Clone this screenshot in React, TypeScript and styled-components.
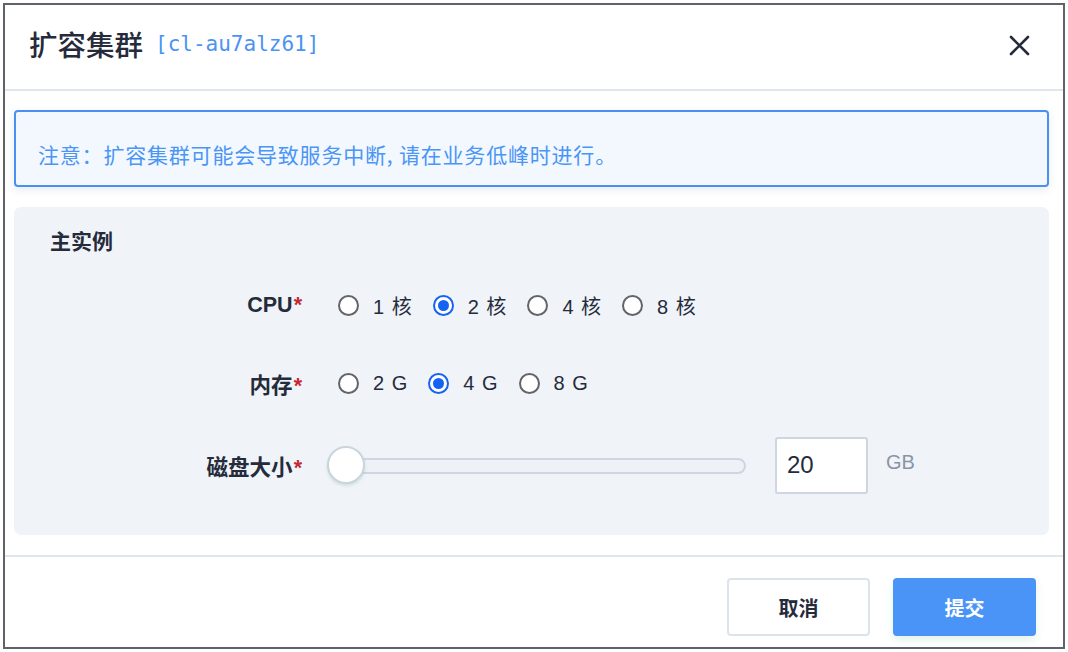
import React from "react";
import styled, { createGlobalStyle } from "styled-components";

const GlobalStyle = createGlobalStyle`
  html, body { margin: 0; padding: 0; background: #ffffff; }
  body { font-family: "Liberation Sans", "Noto Sans CJK SC", Arial, sans-serif; }
  * { box-sizing: border-box; }
`;

const Frame = styled.div`
  padding: 3px 0 0 3px;
`;

const Dialog = styled.div`
  width: 1062px;
  height: 646px;
  border: 2px solid #5f6269;
  background: #ffffff;
  display: flex;
  flex-direction: column;
`;

const Header = styled.div`
  height: 86px;
  flex: none;
  display: flex;
  align-items: center;
  padding: 0 32px 0 24px;
  border-bottom: 2px solid #e0e6ed;
`;

const Title = styled.h1`
  margin: 0;
  font-family: "Noto Sans CJK SC", sans-serif;
  font-size: 28.5px;
  font-weight: 500;
  color: #252b3b;
  line-height: 1;
  display: flex;
  align-items: center;
  gap: 12px;
  flex: 1;
  padding-bottom: 6px;
`;

const ClusterId = styled.span`
  font-family: "DejaVu Sans Mono", "Liberation Mono", monospace;
  font-size: 21px;
  font-weight: 400;
  color: #4b93f3;
`;

const CloseButton = styled.button`
  width: 24px;
  height: 24px;
  border: none;
  background: none;
  padding: 0;
  display: flex;
  align-items: center;
  justify-content: center;
  margin-bottom: 4px;
  cursor: pointer;
`;

const Body = styled.div`
  padding: 19px 14px 20px 9px;
  display: flex;
  flex-direction: column;
  gap: 20px;
  border-bottom: 2px solid #e0e6ed;
`;

const Alert = styled.div`
  height: 77px;
  border: 2px solid #4a90f0;
  border-radius: 4px;
  background: #f3f8fe;
  box-shadow: 0 3px 8px rgba(60, 90, 130, 0.12);
  display: flex;
  align-items: center;
  padding: 0 22px;
  font-family: "Noto Sans CJK SC", sans-serif;
  font-size: 21px;
  letter-spacing: 0.8px;
  color: #4a95f5;
  padding-top: 10px;
`;

const Panel = styled.div`
  height: 328px;
  border-radius: 7px;
  background: #f0f4f8;
  padding: 19px 0 0 36px;
  display: flex;
  flex-direction: column;
`;

const SectionTitle = styled.div`
  font-family: "Noto Sans CJK SC", sans-serif;
  font-size: 21px;
  font-weight: 700;
  color: #252b3b;
  line-height: 28px;
  margin-bottom: 22px;
`;

const Row = styled.div<{ $top?: number }>`
  height: 58px;
  margin-top: ${(p) => p.$top ?? 0}px;
  display: grid;
  grid-template-columns: 252px 1fr;
  column-gap: 36px;
  align-items: center;
`;

const Label = styled.div`
  text-align: right;
  font-family: "Liberation Sans", "Noto Sans CJK SC", sans-serif;
  font-size: 21.5px;
  font-weight: 700;
  color: #252b3b;
`;

const Star = styled.span`
  color: #c62a30;
  font-weight: 700;
  margin-left: 1px;
`;

const RadioGroup = styled.div`
  display: flex;
  align-items: center;
  gap: 20px;
`;

const Option = styled.label`
  display: flex;
  align-items: center;
  gap: 14px;
  font-family: "Liberation Sans", "Noto Sans CJK SC", sans-serif;
  font-size: 20px;
  color: #252b3b;
  letter-spacing: 1px;
  cursor: pointer;
`;

const Radio = styled.span<{ $checked?: boolean }>`
  width: 21px;
  height: 21px;
  border-radius: 50%;
  border: 2px solid ${(p) => (p.$checked ? "#1463f3" : "#626469")};
  background: #ffffff;
  display: flex;
  align-items: center;
  justify-content: center;
  &::after {
    content: "";
    width: 11px;
    height: 11px;
    border-radius: 50%;
    background: ${(p) => (p.$checked ? "#1463f3" : "transparent")};
  }
`;

const DiskControls = styled.div`
  display: flex;
  align-items: center;
  margin-left: -11px;
`;

const Slider = styled.div`
  width: 419px;
  height: 40px;
  display: flex;
  align-items: center;
  position: relative;
`;

const Track = styled.div`
  flex: 1;
  height: 16px;
  margin-left: 3px;
  margin-top: 2px;
  border-radius: 8px;
  background: #eef1f6;
  border: 2px solid #cdd6e1;
`;

const Thumb = styled.div`
  position: absolute;
  left: 0;
  top: 1px;
  width: 38px;
  height: 38px;
  border-radius: 50%;
  background: #ffffff;
  border: 2px solid #c9d4dc;
  box-shadow: 0 2px 3px rgba(120, 170, 150, 0.25);
`;

const SizeInput = styled.div`
  width: 93px;
  height: 57px;
  margin-left: 29px;
  border: 2px solid #cdd6e1;
  border-radius: 3px;
  background: #ffffff;
  display: flex;
  align-items: center;
  padding: 0 10px;
  font-family: "Liberation Sans", sans-serif;
  font-size: 24px;
  color: #252b3b;
`;

const Unit = styled.span`
  margin-left: 18px;
  margin-bottom: 6px;
  font-family: "Liberation Sans", sans-serif;
  font-size: 20px;
  color: #8a94a6;
`;

const Footer = styled.div`
  flex: 1;
  display: flex;
  justify-content: flex-end;
  align-items: flex-start;
  padding: 21px 27px 0 0;
  gap: 23px;
`;

const Button = styled.button<{ $primary?: boolean }>`
  width: 143px;
  height: 58px;
  border-radius: 4px;
  border: 2px solid ${(p) => (p.$primary ? "#4a94f8" : "#dde3eb")};
  background: ${(p) => (p.$primary ? "#4a94f8" : "#ffffff")};
  color: ${(p) => (p.$primary ? "#ffffff" : "#252b3b")};
  box-shadow: ${(p) => (p.$primary ? "0 4px 8px rgba(120, 200, 160, 0.22)" : "none")};
  font-family: "Noto Sans CJK SC", sans-serif;
  font-size: 20px;
  font-weight: 700;
  cursor: pointer;
`;

const cpuOptions = ["1 核", "2 核", "4 核", "8 核"];
const memOptions = ["2 G", "4 G", "8 G"];

export default function App() {
  return (
    <>
      <GlobalStyle />
      <Frame>
        <Dialog>
          <Header>
            <Title>
              扩容集群
              <ClusterId>[cl-au7alz61]</ClusterId>
            </Title>
            <CloseButton aria-label="关闭">
              <svg width="21" height="21" viewBox="0 0 21 21">
                <path d="M2 2 L19 19 M19 2 L2 19" stroke="#252b3b" strokeWidth="2.6" strokeLinecap="round" />
              </svg>
            </CloseButton>
          </Header>
          <Body>
            <Alert>注意：扩容集群可能会导致服务中断, 请在业务低峰时进行。</Alert>
            <Panel>
              <SectionTitle>主实例</SectionTitle>
              <Row>
                <Label>
                  CPU<Star>*</Star>
                </Label>
                <RadioGroup>
                  {cpuOptions.map((o, i) => (
                    <Option key={o}>
                      <Radio $checked={i === 1} />
                      {o}
                    </Option>
                  ))}
                </RadioGroup>
              </Row>
              <Row $top={20}>
                <Label>
                  内存<Star>*</Star>
                </Label>
                <RadioGroup>
                  {memOptions.map((o, i) => (
                    <Option key={o}>
                      <Radio $checked={i === 1} />
                      {o}
                    </Option>
                  ))}
                </RadioGroup>
              </Row>
              <Row $top={24}>
                <Label>
                  磁盘大小<Star>*</Star>
                </Label>
                <DiskControls>
                  <Slider>
                    <Track />
                    <Thumb />
                  </Slider>
                  <SizeInput>20</SizeInput>
                  <Unit>GB</Unit>
                </DiskControls>
              </Row>
            </Panel>
          </Body>
          <Footer>
            <Button>取消</Button>
            <Button $primary>提交</Button>
          </Footer>
        </Dialog>
      </Frame>
    </>
  );
}
